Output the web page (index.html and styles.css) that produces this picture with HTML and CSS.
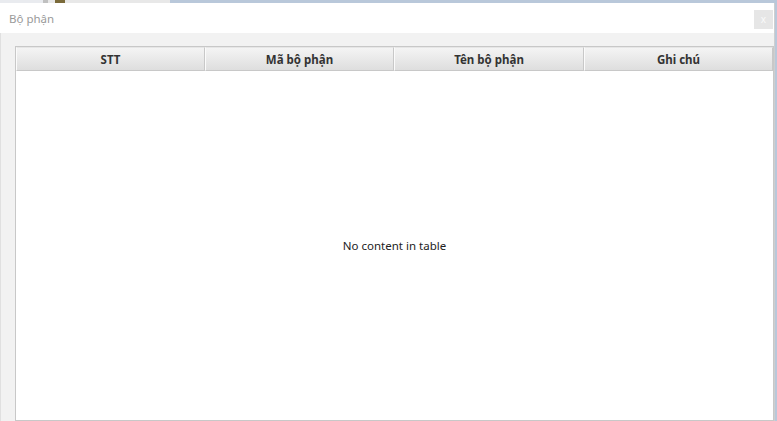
FILE: index.html
```html
<!DOCTYPE html>
<html>
<head>
<meta charset="utf-8">
<link rel="stylesheet" href="styles.css">
</head>
<body>
<div class="topstrip">
  <div class="ts-a"></div>
  <div class="ts-b"><span class="ts-icon"></span></div>
  <div class="ts-c"></div>
</div>
<div class="window">
  <div class="titlebar">
    <span class="title">Bộ phận</span>
    <span class="close">x</span>
  </div>
  <div class="body">
    <div class="table">
      <div class="thead">
        <div class="th">STT</div>
        <div class="th">Mã bộ phận</div>
        <div class="th">Tên bộ phận</div>
        <div class="th">Ghi chú</div>
      </div>
      <div class="tbody">No content in table</div>
    </div>
  </div>
</div>
</body>
</html>
```
FILE: styles.css
```css
* { box-sizing: border-box; }
html, body { margin: 0; padding: 0; }
body {
  width: 777px;
  height: 421px;
  overflow: hidden;
  background: #b9c8da;
  font-family: "Noto Sans", "Open Sans", sans-serif;
}
.topstrip {
  display: flex;
  height: 3px;
}
.ts-a { width: 43px; background: #e9ebef; }
.ts-b { width: 127px; background: #e8e8e8; border-left: 5px solid #c0c0c0; position: relative; }
.ts-icon { position: absolute; left: 7px; top: 0; width: 10px; height: 3px; background: #7a6a3a; }
.ts-c { flex: 1; background: #b9c8da; }
.window {
  width: 775px;
  height: 418px;
  background: #f2f2f2;
  border-right: 1px solid #cfcfcf;
  display: flex;
  flex-direction: column;
}
.titlebar {
  height: 30px;
  background: #ffffff;
  display: flex;
  align-items: center;
  justify-content: space-between;
  padding: 0 1px 0 9px;
}
.title {
  font-size: 11.5px;
  color: #9a9a9a;
}
.close {
  width: 19px;
  height: 19px;
  background: #e6e6e6;
  color: #fafafa;
  font-size: 10px;
  line-height: 18px;
  text-align: center;
  margin-top: 2px;
}
.body {
  flex: 1;
  padding: 13px 0 0 14px;
  border-left: 1px solid #e0e0e0;
}
.table {
  height: 375px;
  background: #ffffff;
  border: 1px solid #c8c8c8;
  display: flex;
  flex-direction: column;
}
.thead {
  display: grid;
  grid-template-columns: 189px 189px 190px 1fr;
  height: 24px;
  background: #f2f2f2;
}
.th {
  background: linear-gradient(#f4f4f4, #dedede);
  border: 1px solid #c8c8c8;
  border-top-color: #e6e6e6;
  border-left-color: #fbfbfb;
  font-size: 11.5px;
  font-weight: bold;
  color: #333;
  display: flex;
  align-items: center;
  justify-content: center;
}
.tbody {
  flex: 1;
  display: flex;
  align-items: center;
  justify-content: center;
  font-size: 11.5px;
  color: #222;
  padding-bottom: 1px;
}
```
